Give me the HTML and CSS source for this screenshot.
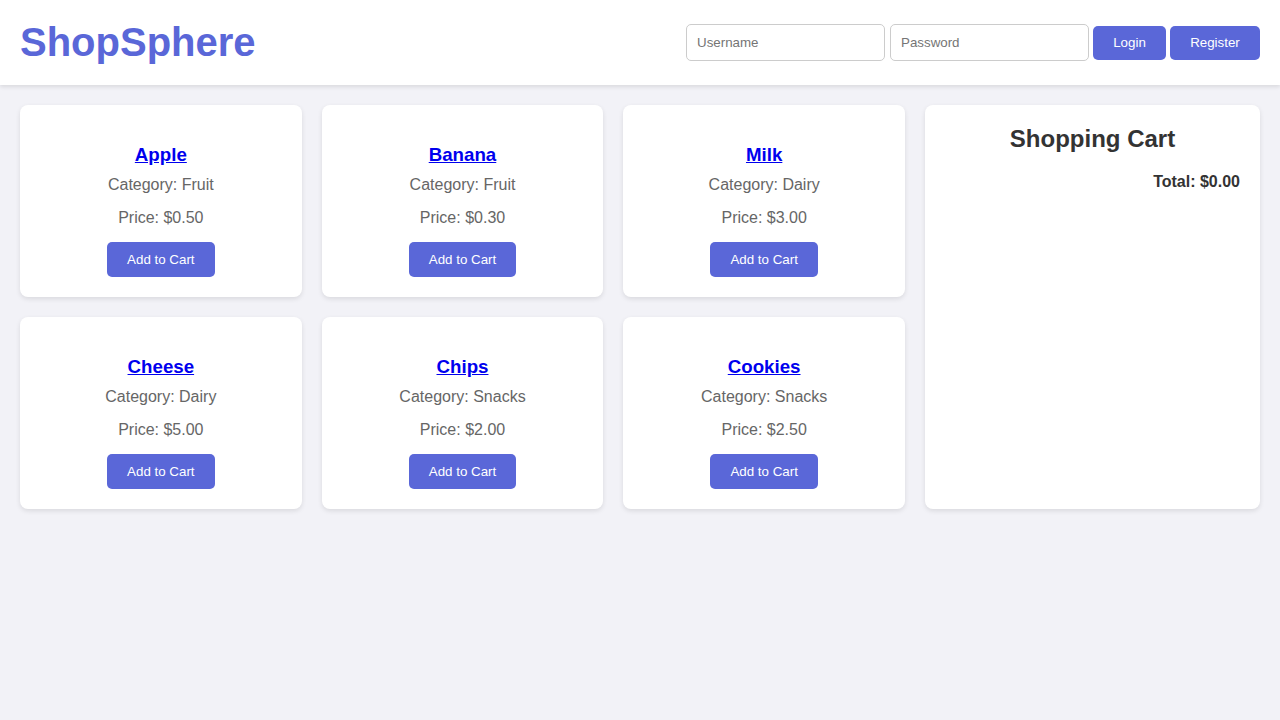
FILE: index.html
```html
<!DOCTYPE html>
<html lang="en">
<head>
<meta charset="utf-8">
<title>ShopSphere</title>
<link rel="stylesheet" href="styles.css">
</head>
<body>
<header class="site-header">
  <h1 class="logo">ShopSphere</h1>
  <form class="auth">
    <input class="auth-input" type="text" placeholder="Username">
    <input class="auth-input" type="password" placeholder="Password">
    <button class="btn btn-login" type="button">Login</button>
    <button class="btn btn-register" type="button">Register</button>
  </form>
</header>
<main class="main">
  <section class="products">
    <div class="card">
      <h3 class="card-title"><a href="#">Apple</a></h3>
      <p class="card-text">Category: Fruit</p>
      <p class="card-text">Price: $0.50</p>
      <button class="btn" type="button">Add to Cart</button>
    </div>
    <div class="card">
      <h3 class="card-title"><a href="#">Banana</a></h3>
      <p class="card-text">Category: Fruit</p>
      <p class="card-text">Price: $0.30</p>
      <button class="btn" type="button">Add to Cart</button>
    </div>
    <div class="card">
      <h3 class="card-title"><a href="#">Milk</a></h3>
      <p class="card-text">Category: Dairy</p>
      <p class="card-text">Price: $3.00</p>
      <button class="btn" type="button">Add to Cart</button>
    </div>
    <div class="card">
      <h3 class="card-title"><a href="#">Cheese</a></h3>
      <p class="card-text">Category: Dairy</p>
      <p class="card-text">Price: $5.00</p>
      <button class="btn" type="button">Add to Cart</button>
    </div>
    <div class="card">
      <h3 class="card-title"><a href="#">Chips</a></h3>
      <p class="card-text">Category: Snacks</p>
      <p class="card-text">Price: $2.00</p>
      <button class="btn" type="button">Add to Cart</button>
    </div>
    <div class="card">
      <h3 class="card-title"><a href="#">Cookies</a></h3>
      <p class="card-text">Category: Snacks</p>
      <p class="card-text">Price: $2.50</p>
      <button class="btn" type="button">Add to Cart</button>
    </div>
  </section>
  <aside class="cart">
    <h2 class="cart-title">Shopping Cart</h2>
    <p class="cart-total">Total: $0.00</p>
  </aside>
</main>
</body>
</html>
```

FILE: styles.css
```css
* { box-sizing: border-box; }

body {
  margin: 0;
  font-family: "Liberation Sans", Arial, sans-serif;
  background: #f2f2f7;
  color: #333;
}

.site-header {
  display: flex;
  align-items: center;
  justify-content: space-between;
  padding: 20px;
  height: 85px;
  background: #fff;
  box-shadow: 0 2px 4px rgba(0, 0, 0, 0.1);
}

.logo {
  margin: 0;
  font-size: 40px;
  line-height: 45px;
  font-weight: bold;
  color: #5a67d8;
}

.auth {
  display: flex;
  align-items: center;
  margin: 0;
}

.auth-input {
  width: 199px;
  height: 37px;
  margin-right: 5px;
  padding: 10px;
  border: 1px solid #ccc;
  border-radius: 5px;
  font-family: "Liberation Sans", Arial, sans-serif;
  font-size: 13.33px;
  color: #333;
  background: #fff;
}

.auth-input + .auth-input { margin-right: 4px; }

.auth-input::placeholder { color: #757575; }

.auth .btn {
  height: 34px;
  padding: 0;
  text-align: center;
}

.btn-login { width: 73px; margin-right: 4px; }
.btn-register { width: 90px; }

.btn {
  padding: 10px 20px;
  border: none;
  border-radius: 5px;
  background: #5a67d8;
  color: #fff;
  font-family: "Liberation Sans", Arial, sans-serif;
  font-size: 13.33px;
  line-height: 15px;
  cursor: pointer;
}

.main {
  display: flex;
  align-items: stretch;
  gap: 20px;
  padding: 20px;
}

.products {
  flex: 1;
  display: grid;
  grid-template-columns: repeat(3, 1fr);
  gap: 20px;
  align-content: start;
}

.card {
  display: flex;
  flex-direction: column;
  align-items: center;
  padding: 20px;
  height: 192px;
  background: #fff;
  border-radius: 8px;
  box-shadow: 0 2px 5px rgba(0, 0, 0, 0.1);
  text-align: center;
}

.card-title {
  margin: 19px 0 10px;
  font-size: 18.72px;
  line-height: 22px;
  font-weight: bold;
}

.card-title a { color: #0000ee; text-decoration: underline; }

.card-text {
  margin: 0 0 15px;
  font-size: 16px;
  line-height: 18.4px;
  color: #666;
}

.card .btn { margin-top: -1px; }

.cart {
  flex: 0 0 335px;
  padding: 20px;
  background: #fff;
  border-radius: 8px;
  box-shadow: 0 2px 5px rgba(0, 0, 0, 0.1);
}

.cart-title {
  margin: 0 0 20px;
  font-size: 24px;
  line-height: 27.6px;
  text-align: center;
  color: #333;
}

.cart-total {
  margin: 0;
  font-size: 16px;
  line-height: 18.4px;
  font-weight: bold;
  text-align: right;
  color: #333;
}
```
